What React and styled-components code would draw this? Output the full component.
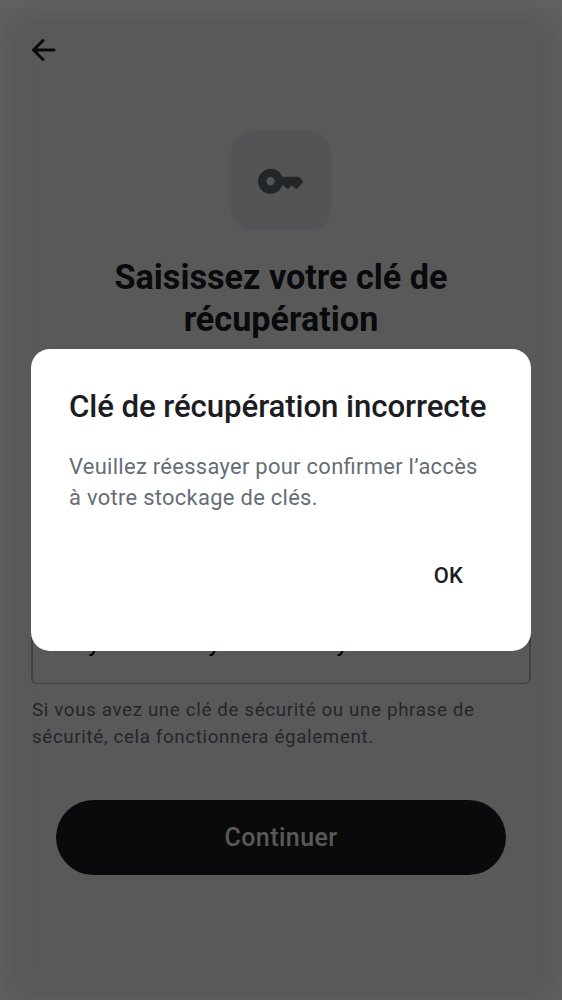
import React from "react";
import styled, { createGlobalStyle } from "styled-components";

const Global = createGlobalStyle`
  * { box-sizing: border-box; }
  body { margin: 0; font-family: Roboto, "Liberation Sans", sans-serif; background: #595959; }
  h1, h2, p { margin: 0; }
  button { font-family: inherit; border: 0; padding: 0; }
`;

const Screen = styled.main`
  position: relative;
  height: 1000px;
  width: 562px;
  overflow: hidden;
  padding: 0 31px;
  display: flex;
  flex-direction: column;
  align-items: center;
  background: #595959;
  box-shadow: inset 0 8px 28px #646464;
`;

const TopBar = styled.header`
  width: 100%;
  height: 100px;
  display: flex;
  align-items: center;
`;

const BackButton = styled.button`
  display: flex;
  background: none;
`;

const IconTile = styled.div`
  width: 100px;
  height: 100px;
  margin-top: 31px;
  border-radius: 22px;
  background: #535456;
  display: flex;
  align-items: center;
  justify-content: center;
`;

const Heading = styled.h1`
  width: 400px;
  height: 85px;
  margin-top: 25px;
  text-align: center;
  font-size: 34.2px;
  line-height: 42px;
  font-weight: 700;
  color: #090a0c;
`;

const Field = styled.div`
  width: 500px;
  height: 94px;
  margin-top: 249px;
  padding: 9px 25px 0;
  border: 2px solid #424246;
  border-bottom-width: 1px;
  border-radius: 6px;
  display: flex;
  align-items: center;
  font-size: 25px;
  letter-spacing: 0.85px;
  white-space: nowrap;
  color: #000;
`;

const Helper = styled.p`
  width: 498px;
  margin-top: 13px;
  font-size: 18.75px;
  line-height: 27px;
  letter-spacing: 0.64px;
  color: #24272a;
`;

const PrimaryButton = styled.button`
  width: 450px;
  height: 75px;
  margin-top: 49px;
  border-radius: 38px;
  background: #090a0c;
  color: #595959;
  font-size: 25px;
  font-weight: 500;
  letter-spacing: 0.45px;
`;

const Dialog = styled.section`
  position: absolute;
  top: 349px;
  left: 31px;
  width: 500px;
  height: 301.5px;
  padding: 38px 38px 0;
  border-radius: 19px;
  background: #fff;
  display: flex;
  flex-direction: column;
`;

const DialogTitle = styled.h2`
  font-size: 31.25px;
  line-height: 40px;
  font-weight: 500;
  letter-spacing: -0.1px;
  white-space: nowrap;
  color: #1b1d22;
`;

const DialogText = styled.p`
  margin-top: 24px;
  font-size: 21.9px;
  line-height: 31px;
  letter-spacing: 0.31px;
  font-feature-settings: "liga" 1;
  white-space: nowrap;
  color: #656d77;
`;

const DialogAction = styled.button`
  align-self: flex-end;
  margin: 45px 30px 0 0;
  height: 34px;
  background: none;
  color: #1b1d22;
  font-size: 21.9px;
  font-weight: 500;
  letter-spacing: 0.16px;
`;

export default function App() {
  return (
    <>
      <Global />
      <Screen>
        <TopBar>
          <BackButton aria-label="Retour">
            <svg width="26" height="24" viewBox="0 0 26 24" fill="none" stroke="#090a0c" strokeWidth="3" strokeLinecap="round" strokeLinejoin="round">
              <path d="M12 2.5 2.5 12 12 21.5M2.5 12H23" />
            </svg>
          </BackButton>
        </TopBar>
        <IconTile>
          <svg width="46" height="26" viewBox="0.5 -0.3 46 26">
            <path fill="#222629" fillRule="evenodd" d="M13 .5a12.5 12.5 0 1 0 11.7 17L26 17l3.2 3.1q1 .9 2 0L34 17l4 3.1q1 .8 2 0l5-5.7q.8-1 0-2L42.2 9.2Q41.5 8.500 40.500 8.500H24.700A12.500 12.500 0 0 0 13 .5ZM13 8.800a4.200 4.200 0 1 1 0 8.400 4.200 4.200 0 0 1 0-8.400Z" />
          </svg>
        </IconTile>
        <Heading>Saisissez votre clé de récupération</Heading>
        <Field>Key ancre key secret key</Field>
        <Helper>Si vous avez une clé de sécurité ou une phrase de sécurité, cela fonctionnera également.</Helper>
        <PrimaryButton>Continuer</PrimaryButton>
        <Dialog role="dialog">
          <DialogTitle>Clé de récupération incorrecte</DialogTitle>
          <DialogText>Veuillez réessayer pour confirmer l’accès<br />à votre stockage de clés.</DialogText>
          <DialogAction>OK</DialogAction>
        </Dialog>
      </Screen>
    </>
  );
}
